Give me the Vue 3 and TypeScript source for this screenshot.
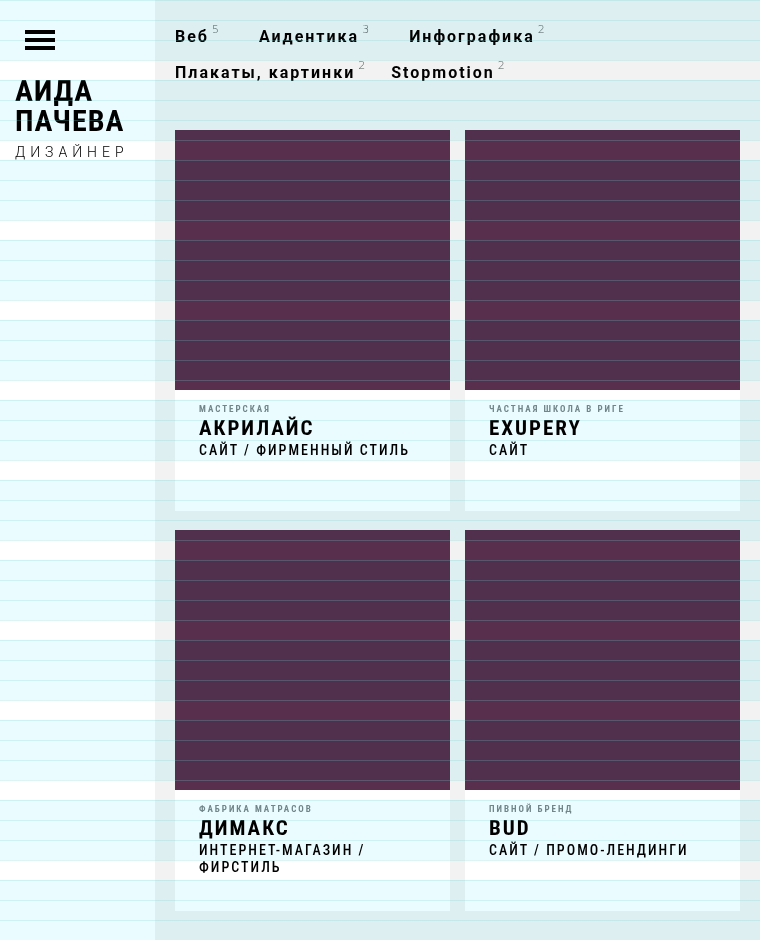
<script setup lang="ts">
interface Category {
  title: string
  count: number
}
interface Project {
  kind: string
  title: string
  work: string
}

const rows: Category[][] = [
  [
    { title: 'Веб', count: 5 },
    { title: 'Аидентика', count: 3 },
    { title: 'Инфографика', count: 2 },
  ],
  [
    { title: 'Плакаты, картинки', count: 2 },
    { title: 'Stopmotion', count: 2 },
  ],
]

const projects: Project[] = [
  { kind: 'Мастерская', title: 'Акрилайс', work: 'Сайт / Фирменный стиль' },
  { kind: 'Частная школа в Риге', title: 'Exupery', work: 'Сайт' },
  { kind: 'Фабрика матрасов', title: 'Димакс', work: 'Интернет-магазин / фирстиль' },
  { kind: 'Пивной бренд', title: 'Bud', work: 'Сайт / Промо-лендинги' },
]
</script>

<template>
  <div class="page">
    <aside class="sidebar">
      <button class="burger" type="button" aria-label="Меню">
        <span></span><span></span><span></span>
      </button>
      <a class="logo" href="#">
        <span class="name">Аида Пачева</span>
        <span class="role">дизайнер</span>
      </a>
    </aside>
    <main class="content">
      <nav class="nav">
        <div v-for="(row, i) in rows" :key="i" class="nav-row">
          <a v-for="item in row" :key="item.title" href="#">{{ item.title }}<sup>{{ item.count }}</sup></a>
        </div>
      </nav>
      <section class="grid">
        <a v-for="p in projects" :key="p.title" class="card" href="#">
          <div class="cover"></div>
          <div class="info">
            <p class="kind">{{ p.kind }}</p>
            <h2>{{ p.title }}</h2>
            <p class="work">{{ p.work }}</p>
          </div>
        </a>
      </section>
    </main>
  </div>
</template>

<style>
body {
  margin: 0;
  background: #f2f2f2;
}
</style>

<style scoped>
.page {
  position: relative;
  isolation: isolate;
  display: flex;
  min-height: 100vh;
  background: #f2f2f2;
  color: #000;
  font-family: "Roboto Condensed", Roboto, sans-serif;
}
/* baseline grid: tinted bands and hairlines over the whole page */
.page::before,
.page::after {
  content: "";
  position: absolute;
  z-index: 1;
  inset: 0;
  pointer-events: none;
}
.page::before {
  background: repeating-linear-gradient(#eafcff 0 60px, #fff 60px 80px);
  mix-blend-mode: multiply;
}
.page::after {
  background: repeating-linear-gradient(rgba(110, 210, 210, 0.24) 0 1px, transparent 1px 20px);
}
a {
  color: inherit;
  text-decoration: none;
}
.sidebar {
  flex: 0 0 155px;
  background: #fff;
}
.burger {
  position: relative;
  z-index: 2;
  display: flex;
  flex-direction: column;
  gap: 4px;
  width: 30px;
  margin: 30px 0 0 25px;
  padding: 0;
  border: 0;
  background: none;
}
.burger span {
  height: 4px;
  background: #000;
}
.logo {
  display: block;
  margin: 26px 15px 0;
}
.name {
  display: block;
  font-size: 30px;
  line-height: 30px;
  font-weight: 700;
  letter-spacing: 1px;
  text-transform: uppercase;
}
.role {
  display: block;
  margin-top: 6px;
  font-family: Roboto, sans-serif;
  font-size: 14px;
  line-height: 20px;
  font-weight: 300;
  letter-spacing: 5px;
  text-transform: uppercase;
}
.content {
  flex: 1;
  min-width: 0;
  padding: 19px 20px 29px;
}
.nav {
  margin-bottom: 39px;
  font-family: Roboto, sans-serif;
  font-size: 16px;
  font-weight: 700;
  line-height: 36px;
  letter-spacing: 2px;
}
.nav-row {
  display: flex;
  gap: 40px;
}
.nav-row + .nav-row {
  gap: 26px;
}
.nav sup {
  display: inline-block;
  margin-left: 3px;
  color: #4c5658;
  font-family: "DejaVu Sans", sans-serif;
  font-size: 11px;
  font-weight: 200;
  line-height: 11px;
  letter-spacing: 0;
  vertical-align: 9px;
}
.grid {
  display: grid;
  grid-template-columns: repeat(2, 1fr);
  gap: 19px 15px;
}
.card {
  background: #fff;
}
.cover {
  height: 260px;
  background: #58304e;
}
.info {
  min-height: 96px;
  padding: 13px 24px 12px;
  text-transform: uppercase;
}
.info p,
.info h2 {
  margin: 0;
}
.info .kind {
  color: #7c8889;
  font-size: 9px;
  line-height: 12px;
  font-weight: 700;
  letter-spacing: 2px;
}
.info h2 {
  font-size: 21px;
  line-height: 27px;
  font-weight: 700;
  letter-spacing: 2px;
}
.work {
  font-size: 14px;
  line-height: 17px;
  font-weight: 500;
  letter-spacing: 2px;
}
</style>
